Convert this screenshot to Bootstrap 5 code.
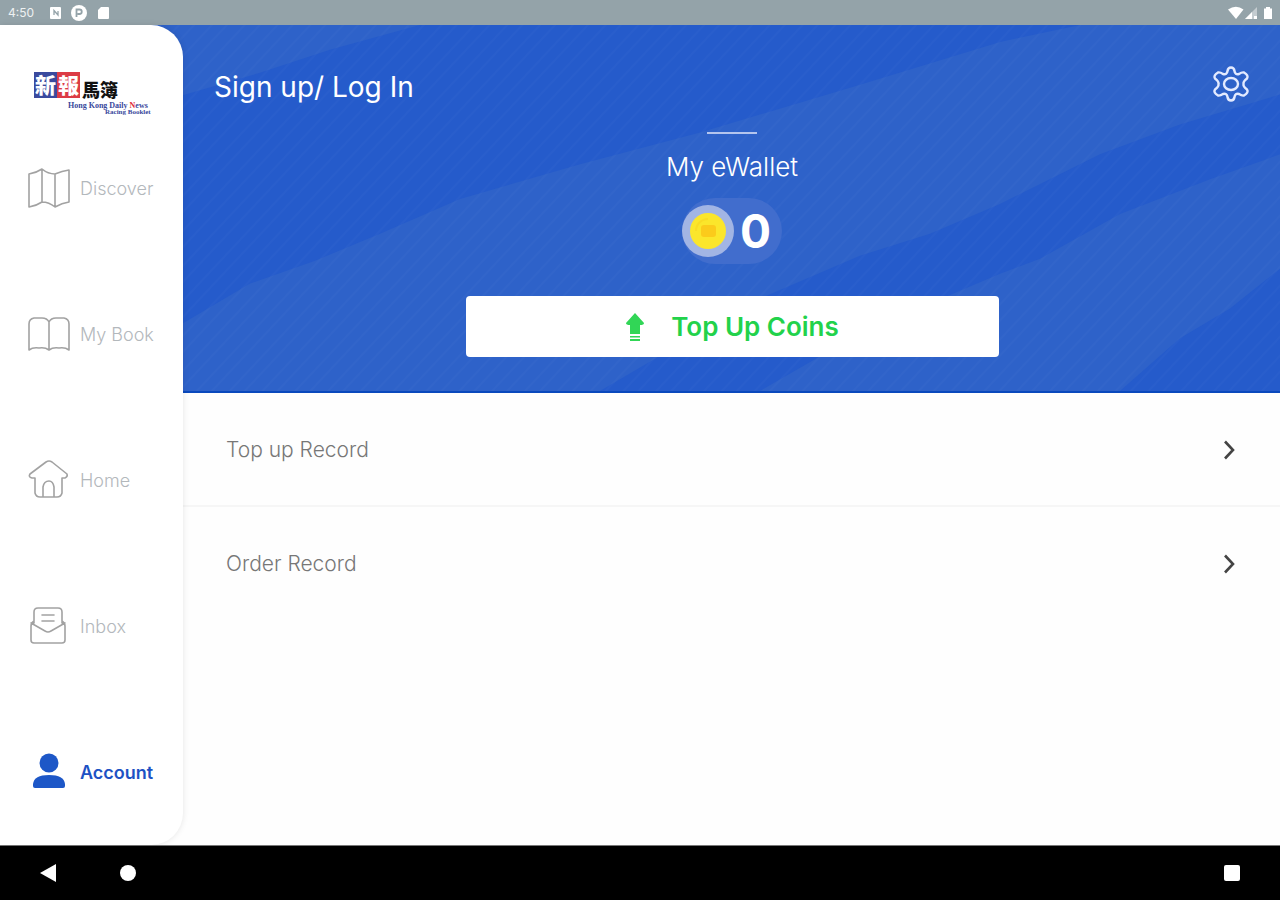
<!DOCTYPE html>
<html lang="en">
<head>
<meta charset="utf-8">
<meta name="viewport" content="width=device-width, initial-scale=1">
<title>Account</title>
<link href="https://cdn.jsdelivr.net/npm/bootstrap@5.3.0/dist/css/bootstrap.min.css" rel="stylesheet">
<style>
  body { font-family: Inter, Roboto, "Noto Sans CJK TC", sans-serif; background: #fefefe; }
  svg { display: block; flex: none; }
  .status-bar { height: 25px; background: #94a3a9; color: #eef1f2; font-size: 12px; line-height: 25px; }
  .side-panel { width: 183px; z-index: 2; border-radius: 0 32px 32px 0; box-shadow: 0 0 6px rgba(0,0,0,.1); padding-top: 39px; }
  .side-link { color: #b3b8bc; font-size: 18px; font-weight: 300; padding-left: 26px; gap: 8px; text-decoration: none; }
  .side-link.active { color: #1d52c4; font-weight: 600; }
  .line-icon { fill: none; stroke: #a2a2a2; stroke-width: 1.6; stroke-linejoin: round; stroke-linecap: round; }
  .logo-cjk { font-family: "Noto Sans CJK TC", sans-serif; font-weight: 900; }
  .logo-latin { font-family: "Liberation Serif", serif; font-weight: 700; fill: #39489c; }
  /* the panel's rounded corners lie over the content column */
  .content { margin-left: -32px; min-width: 0; }
  .hero { background: #255bcb; padding: 40px 30px 34px 63px; border-bottom: 2px solid #0a49bd; }
  .hero-art { inset: 0; width: 100%; height: 100%; }
  .hero-body { position: relative; }
  .sign-link { font-size: 28px; line-height: 44px; font-weight: 400; }
  .rule { width: 50px; height: 2px; background: #b4c5ee; margin-top: 23px; }
  .wallet-title { font-size: 26px; line-height: 32px; font-weight: 300; margin-top: 17px; }
  .balance { height: 66px; border-radius: 33px; background: #416dcd; margin-top: 15px; padding-right: 11px; gap: 6px; }
  .balance-value { font-size: 46px; font-weight: 700; line-height: 66px; }
  .topup { width: 52%; max-width: 533px; height: 61px; margin-top: 32px; border-radius: 4px; background: #fff; color: #22d24b; font-size: 26px; font-weight: 600; gap: 26px; }
  .topup:hover { background: #f4fff6; color: #22d24b; }
  .record { height: 114px; padding: 2px 43px 0 75px; color: #777; font-size: 21px; font-weight: 300; border-bottom: 2px solid #f6f6f6; text-decoration: none; }
  .record:last-child { border-bottom: 0; height: 112px; }
  .system-nav { height: 55px; background: #000; border-top: 1px solid #777; padding: 0 39px; }
  .system-nav button { line-height: 0; }
</style>
</head>
<body class="d-flex flex-column min-vh-100">

<header class="status-bar d-flex align-items-center justify-content-between ps-2 pe-1">
  <div class="d-flex align-items-center">
    <span>4:50</span>
    <svg class="ms-3" width="60" height="16" viewBox="0 0 60 16" fill="#fff" aria-hidden="true">
      <rect x="0" y="2" width="11" height="12" rx="1"/>
      <path d="M4 10V5.500l4 4.500V6" fill="none" stroke="#94a3a9" stroke-width="1.300"/>
      <circle cx="29" cy="8" r="8"/>
      <path d="M26.500 12V4.500h3a2.200 2.200 0 0 1 0 4.500h-2" fill="none" stroke="#94a3a9" stroke-width="1.800"/>
      <path d="M49 2h7a1 1 0 0 1 1 1v10a1 1 0 0 1-1 1h-9a1 1 0 0 1-1-1V5z" transform="translate(2)"/>
    </svg>
  </div>
  <svg width="48" height="16" viewBox="0 0 48 16" fill="#fff" aria-hidden="true">
    <path d="M0 4.500Q8-1 15.500 4.500L8 14z"/>
    <path d="M17 14L29 2v12z" opacity=".45"/><path d="M17 14l7-7v7zM26 11h3v3h-3z"/>
    <path d="M38 2h4v1.500h2V14h-8V3.500h2z"/>
  </svg>
</header>

<main class="d-flex flex-fill">
  <aside class="side-panel position-relative flex-shrink-0 d-flex flex-column bg-white">
    <svg width="183" height="51" viewBox="0 -8 183 51" role="img" aria-label="新報馬簿">
      <rect x="34" y="0" width="23" height="26" fill="#3a4a9e"/>
      <rect x="57" y="0" width="23" height="26" fill="#dc3b45"/>
      <g class="logo-cjk">
        <text x="35" y="21" font-size="21" fill="#fff">新</text>
        <text x="58" y="21" font-size="21" fill="#fff">報</text>
        <text x="82" y="25" font-size="18" fill="#111">馬簿</text>
      </g>
      <g class="logo-latin">
        <text x="68" y="36" font-size="8">Hong Kong Daily <tspan fill="#e02a35">N</tspan>ews</text>
        <text x="105" y="42" font-size="7">Racing Booklet</text>
      </g>
    </svg>
    <nav class="d-flex flex-column flex-fill">
      <a href="#" class="side-link d-flex align-items-center flex-fill">
        <svg class="line-icon" width="46" height="46" viewBox="0 0 46 46"><path d="M3 9q7-1 13-5 6 5 13 5 7-3 14-4v32q-7 1-14 5-6-5-13-5-6 4-13 5zM16 4v33M29 9v33"/></svg>
        <span>Discover</span></a>
      <a href="#" class="side-link d-flex align-items-center flex-fill">
        <svg class="line-icon" width="46" height="46" viewBox="0 0 46 46"><path d="M23 11q-2-4-7-4H8q-5 1-5 6v26q4-3 10-2 6-1 10 2 4-3 10-2 6-1 10 2V13q0-5-5-6h-8q-5 0-7 4zM23 11v28"/></svg>
        <span>My Book</span></a>
      <a href="#" class="side-link d-flex align-items-center flex-fill">
        <svg class="line-icon" width="46" height="46" viewBox="0 0 46 46"><path d="M20 5q3-2 6 0l15 12q1 3-2 4h-3v15q-1 4-5 4H14q-4 0-5-4V21H6q-4-1-2-4zM17 40V30q1-6 6-6 4 0 5 6v10"/></svg>
        <span>Home</span></a>
      <a href="#" class="side-link d-flex align-items-center flex-fill">
        <svg class="line-icon" width="46" height="46" viewBox="0 0 46 46"><path d="M8 20V9q0-4 4-4h20q4 0 4 4v11M8 18q-3 2-3 5v14q0 3 3 3h28q3 0 3-3V23q0-3-3-5M5 20l14 8q3 2 6 0l14-8M16 12h12M16 18h12"/></svg>
        <span>Inbox</span></a>
      <a href="#" class="side-link active d-flex align-items-center flex-fill" aria-current="page">
        <svg width="46" height="46" viewBox="0 0 46 46" fill="#1d57c7"><circle cx="23" cy="14" r="9.500"/><path d="M7 35q1-9 16-9t16 9v2q0 2-2 2H9q-2 0-2-2z"/></svg>
        <span>Account</span></a>
    </nav>
  </aside>

  <section class="content flex-fill">
    <div class="hero position-relative text-white">
      <svg class="hero-art position-absolute" viewBox="151 25 1129 368" preserveAspectRatio="none" aria-hidden="true">
        <defs>
          <pattern id="hatch" width="24" height="24" patternUnits="userSpaceOnUse" patternTransform="rotate(43)">
            <path d="M4 0v24M15 0v24" stroke="#fff" stroke-opacity=".02" stroke-width="2"/>
          </pattern>
        </defs>
        <g fill="#2e62c9">
          <path d="M151 25H420L330 50 260 73 151 105z"/>
          <path d="M151 343L183 325 250 285 315 262 380 235 460 200 580 165 700 133 860 85 1000 42 1080 25H1280V95L1180 125 1100 155 1000 205 930 235 860 257 760 300 690 340 600 393H151z"/>
          <path d="M1280 155L1210 180 1120 215 1040 260 1000 275 860 335 760 393H1120L1180 340 1230 310 1280 270z"/>
        </g>
        <rect x="151" y="25" width="1129" height="368" fill="url(#hatch)"/>
      </svg>
      <div class="hero-body d-flex justify-content-between align-items-center">
        <a href="#" class="sign-link text-white text-decoration-none">Sign up/ Log In</a>
        <button type="button" class="btn p-0 border-0" aria-label="Settings">
          <svg width="38" height="44" viewBox="0 3 38 38" preserveAspectRatio="xMidYMid" fill="none" stroke="#e3eaff" stroke-width="2.400" stroke-linejoin="round"><path d="M15.500 6Q16 2.500 19 2.500T22.500 6q.5 4 4.500 3 3-2 5-1.500 5 3 3 6-4 3-3.500 5.500-.5 2.500 3.500 5.500 2 3-3 6-2 .5-5-1.500-4-1-4.500 3Q22 35.500 19 35.500T15.500 32q-.5-4-4.500-3-3 2-5 1.500-5-3-3-6 4-3 3.500-5.500Q7 16.500 3 13.500q-2-3 3-6 2-.5 5 1.500 4 1 4.500-3z"/><ellipse cx="19" cy="19" rx="7" ry="6"/></svg>
        </button>
      </div>
      <div class="hero-body d-flex flex-column align-items-center">
        <div class="rule"></div>
        <div class="wallet-title">My eWallet</div>
        <div class="balance d-flex align-items-center">
          <svg width="52" height="52" viewBox="0 0 52 52" aria-hidden="true"><circle cx="26" cy="26" r="26" fill="#a2b5e4"/><circle cx="26" cy="26" r="18" fill="#fbe62b"/><path d="M14 26a12 12 0 0 1 12-12" fill="none" stroke="#f9dc25" stroke-width="2"/><rect x="19" y="20" width="15" height="12" rx="3" fill="#fbcb1b"/></svg>
          <span class="balance-value">0</span>
        </div>
        <button type="button" class="topup btn border-0 p-0 d-flex align-items-center justify-content-center">
          <svg width="20" height="30" viewBox="0 0 20 30" fill="#31d656" aria-hidden="true"><path d="M10 1l9 10q0 2-4 2v9H5v-9q-4 0-4-2zM5 24h10v1.500H5zM5 27h10v2H5z"/></svg>
          <span>Top Up Coins</span>
        </button>
      </div>
    </div>
    <div class="d-flex flex-column">
      <a href="#" class="record d-flex align-items-center justify-content-between"><span>Top up Record</span>
        <svg width="16" height="22" viewBox="0 0 16 22" fill="none" stroke="#444" stroke-width="2.600"><path d="M4 2.500l8 8.500-8 8.500"/></svg></a>
      <a href="#" class="record d-flex align-items-center justify-content-between"><span>Order Record</span>
        <svg width="16" height="22" viewBox="0 0 16 22" fill="none" stroke="#444" stroke-width="2.600"><path d="M4 2.500l8 8.500-8 8.500"/></svg></a>
    </div>
  </section>
</main>

<footer class="system-nav d-flex align-items-center">
  <button type="button" class="btn p-0 border-0" aria-label="Back"><svg width="18" height="18" viewBox="0 0 18 18" fill="#fff"><path d="M1 9L17 0v18z"/></svg></button>
  <button type="button" class="btn p-0 border-0 ms-5" aria-label="Home screen"><svg width="48" height="18" viewBox="0 0 48 18" fill="#fff"><circle cx="23" cy="9" r="8"/></svg></button>
  <button type="button" class="btn p-0 border-0 ms-auto" aria-label="Recent apps"><svg width="18" height="18" viewBox="0 0 18 18" fill="#fff"><rect x="1" y="1" width="16" height="16" rx="2"/></svg></button>
</footer>

<script src="https://cdn.jsdelivr.net/npm/bootstrap@5.3.0/dist/js/bootstrap.bundle.min.js"></script>
</body>
</html>
